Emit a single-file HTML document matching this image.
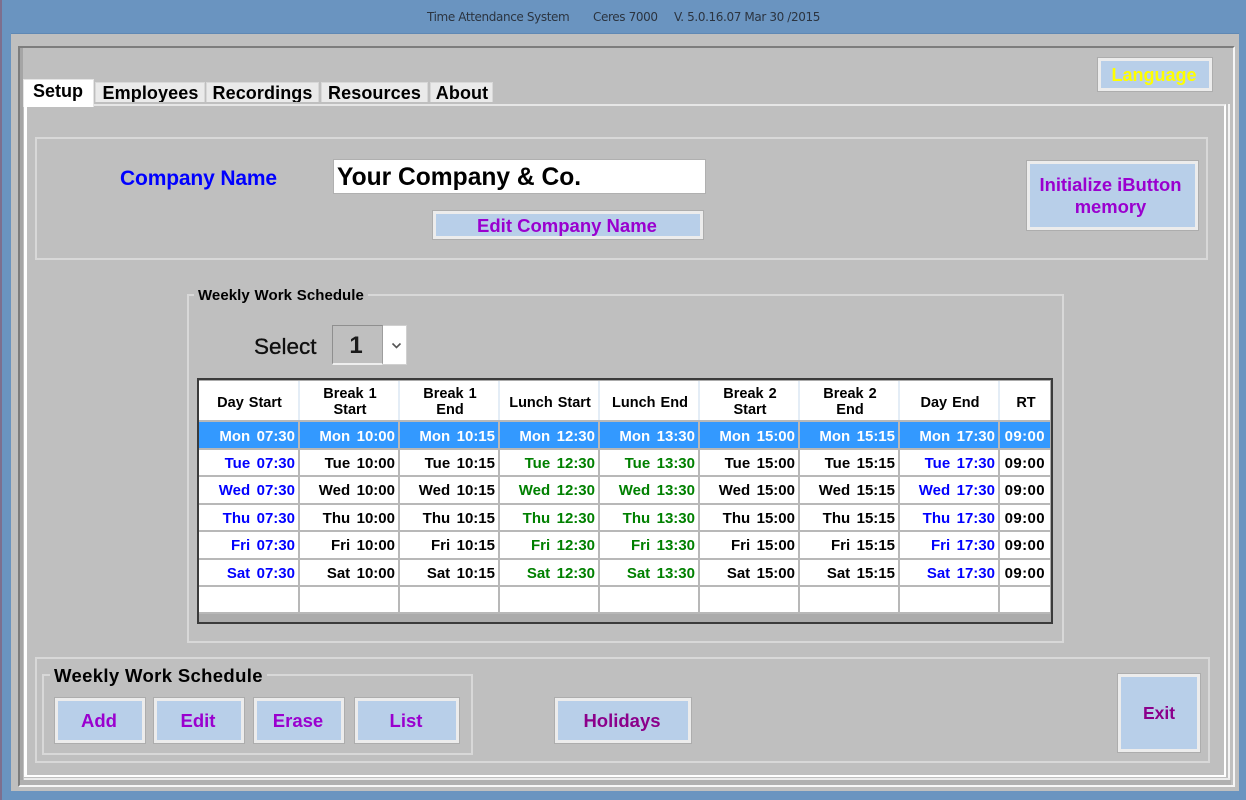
<!DOCTYPE html>
<html><head><meta charset="utf-8"><style>
html,body{margin:0;padding:0}
body{width:1246px;height:800px;overflow:hidden;position:relative;background:#6a94c0;font-family:"Liberation Sans",sans-serif;font-weight:bold;color:#000}
div{position:absolute;box-sizing:border-box}
#w{left:0;top:0;width:1246px;height:800px;background:#6a94c0;filter:blur(.35px)}
.t{white-space:nowrap}
.tt{font-size:12px;font-weight:normal;color:#2b3440;line-height:16px;font-family:'DejaVu Sans',sans-serif;letter-spacing:-.38px;top:9px}
.box{border:2px solid #d8d8d8}
.btn{background:#b8cfe9;border:3px solid #ececec;outline:1px solid #adadad;color:#9a00cf;font-size:18.5px;display:flex;align-items:center;justify-content:center;text-align:center;line-height:22px;padding-right:2px}
.tab{background:#eaeaea;border:1px solid #d8d8d8;border-bottom:0;top:82px;height:20px;font-size:18px;letter-spacing:.1px;line-height:21px;overflow:hidden;text-align:center}
.c{height:27px;width:100px;border-right:2px solid #b8b8b8;border-bottom:2px solid #b8b8b8;font-size:15px;line-height:28px;text-align:right;padding-right:3px;word-spacing:2.3px;white-space:nowrap;background:#fff}
.r{width:50px;padding-right:5px;border-right:0;letter-spacing:.4px}
.k{height:28px;line-height:28px}
.s{height:28px;line-height:29px;background:#3399ff;color:#fff}
.h{top:0;width:100px;height:40px;padding:2px 0 0 2px;border-right:2px solid #e4edf6;font-size:14.5px;line-height:16px;text-align:center;display:flex;align-items:center;justify-content:center;background:#fff;word-spacing:1px}
.o{padding-top:4px}
.b{color:#0000ff}.g{color:#008000}
.w1{left:-1px;width:101px}
</style></head><body>
<div id="w">
<div style="left:0;top:0;width:2px;height:800px;background:#7d6f8e"></div>
<div class="t tt" style="left:427px">Time Attendance System</div>
<div class="t tt" style="left:593px">Ceres 7000</div>
<div class="t tt" style="left:674px">V. 5.0.16.07 Mar 30 /2015</div>

<div style="left:11px;top:33px;width:1228px;height:758px;background:#bfbfbf;border-top:1px solid #5f88b4"></div>
<div style="left:18px;top:46px;width:1217px;height:741px;border:2px solid #f6f6f6;border-top:2px solid #7d7d7d;border-left:2px solid #7d7d7d"></div>
<div style="left:20px;top:48px;width:3px;height:737px;background:#a5a5a5"></div>
<div style="left:20px;top:780px;width:1211px;height:5px;background:#b0b0b0"></div>
<div style="left:1228px;top:104px;width:2px;height:676px;background:#f4f4f4"></div>
<div style="left:24px;top:778px;width:1206px;height:2px;background:#ececec"></div>

<div style="left:24px;top:104px;width:1202px;height:673px;border:2px solid #fff;border-left:3px solid #fff;border-top:2px solid #e6e6e6;background:#bfbfbf"></div>

<div class="tab" style="left:95px;width:110px;padding-left:1px">Employees</div>
<div class="tab" style="left:206px;width:113px">Recordings</div>
<div class="tab" style="left:321px;width:107px">Resources</div>
<div class="tab" style="left:430px;width:63px;padding-left:1px">About</div>
<div style="left:23px;top:79px;width:71px;height:28px;background:#fff;font-size:18px;line-height:22px;text-align:center;border:1px solid #e4e4e4;border-bottom:0;padding-right:1px">Setup</div>

<div class="btn" style="left:1098px;top:58px;width:114px;height:33px;color:#ffff00;font-size:18px">Language</div>

<div class="box" style="left:35px;top:137px;width:1173px;height:123px"></div>
<div class="t" style="left:120px;top:167px;font-size:21px;line-height:24px;color:#0000ff;letter-spacing:-.15px">Company Name</div>
<div style="left:334px;top:160px;width:371px;height:33px;background:#fff;outline:1px solid #b0b0b0;font-size:24.6px;line-height:35px;padding-left:3px;white-space:nowrap">Your Company &amp; Co.</div>
<div class="btn" style="left:433px;top:211px;width:270px;height:28px;padding-top:1px">Edit Company Name</div>
<div class="btn" style="left:1027px;top:161px;width:171px;height:69px;padding-right:4px;font-size:18.4px">Initialize iButton<br>memory</div>

<div class="box" style="left:187px;top:294px;width:877px;height:349px"></div>
<div class="t" style="left:194px;top:288px;padding:0 4px;background:#bfbfbf;font-size:15px;line-height:16px;word-spacing:.6px;letter-spacing:.05px">Weekly Work Schedule</div>
<div class="t" style="left:254px;top:334px;font-size:22.5px;line-height:26px;font-weight:normal;-webkit-text-stroke:.3px #000;color:#111">Select</div>
<div style="left:332px;top:325px;width:75px;height:40px;background:#fff;border:1px solid #d0d0d0"></div>
<div style="left:332px;top:325px;width:51px;height:40px;background:#bfbfbf;border:1px solid #8f8f8f;border-right:1px solid #9d9d9d;border-bottom:2px solid #eee;font-size:24px;line-height:40px;padding-right:3px;text-align:center;color:#1a1a1a">1</div>
<svg style="position:absolute;left:391px;top:342px" width="11" height="8" viewBox="0 0 11 8"><path d="M1.5 1.5 L5.5 5.5 L9.5 1.5" fill="none" stroke="#555" stroke-width="1.6"/></svg>

<div style="left:197px;top:378px;width:856px;height:246px;background:#ababab;border:2px solid #3b3b3b"></div>
<div style="left:200px;top:381px;width:850px;height:232px">
<div class="h o w1">Day Start</div>
<div class="h" style="left:100px">Break 1<br>Start</div>
<div class="h" style="left:200px">Break 1<br>End</div>
<div class="h o" style="left:300px">Lunch Start</div>
<div class="h o" style="left:400px">Lunch End</div>
<div class="h" style="left:500px">Break 2<br>Start</div>
<div class="h" style="left:600px">Break 2<br>End</div>
<div class="h o" style="left:700px">Day End</div>
<div class="h o" style="left:800px;width:50px;border-right:0">RT</div>
<div style="left:-1px;top:39px;width:851px;height:2px;background:#b8b8b8"></div>

<div class="c s w1" style="top:41px">Mon 07:30</div><div class="c s" style="left:100px;top:41px">Mon 10:00</div><div class="c s" style="left:200px;top:41px">Mon 10:15</div><div class="c s" style="left:300px;top:41px">Mon 12:30</div><div class="c s" style="left:400px;top:41px">Mon 13:30</div><div class="c s" style="left:500px;top:41px">Mon 15:00</div><div class="c s" style="left:600px;top:41px">Mon 15:15</div><div class="c s" style="left:700px;top:41px">Mon 17:30</div><div class="c s r" style="left:800px;top:41px">09:00</div>

<div class="c b w1" style="top:69px">Tue 07:30</div><div class="c" style="left:100px;top:69px">Tue 10:00</div><div class="c" style="left:200px;top:69px">Tue 10:15</div><div class="c g" style="left:300px;top:69px">Tue 12:30</div><div class="c g" style="left:400px;top:69px">Tue 13:30</div><div class="c" style="left:500px;top:69px">Tue 15:00</div><div class="c" style="left:600px;top:69px">Tue 15:15</div><div class="c b" style="left:700px;top:69px">Tue 17:30</div><div class="c r" style="left:800px;top:69px">09:00</div>

<div class="c k b w1" style="top:96px">Wed 07:30</div><div class="c k" style="left:100px;top:96px">Wed 10:00</div><div class="c k" style="left:200px;top:96px">Wed 10:15</div><div class="c k g" style="left:300px;top:96px">Wed 12:30</div><div class="c k g" style="left:400px;top:96px">Wed 13:30</div><div class="c k" style="left:500px;top:96px">Wed 15:00</div><div class="c k" style="left:600px;top:96px">Wed 15:15</div><div class="c k b" style="left:700px;top:96px">Wed 17:30</div><div class="c k r" style="left:800px;top:96px">09:00</div>

<div class="c b w1" style="top:124px">Thu 07:30</div><div class="c" style="left:100px;top:124px">Thu 10:00</div><div class="c" style="left:200px;top:124px">Thu 10:15</div><div class="c g" style="left:300px;top:124px">Thu 12:30</div><div class="c g" style="left:400px;top:124px">Thu 13:30</div><div class="c" style="left:500px;top:124px">Thu 15:00</div><div class="c" style="left:600px;top:124px">Thu 15:15</div><div class="c b" style="left:700px;top:124px">Thu 17:30</div><div class="c r" style="left:800px;top:124px">09:00</div>

<div class="c k b w1" style="top:151px">Fri 07:30</div><div class="c k" style="left:100px;top:151px">Fri 10:00</div><div class="c k" style="left:200px;top:151px">Fri 10:15</div><div class="c k g" style="left:300px;top:151px">Fri 12:30</div><div class="c k g" style="left:400px;top:151px">Fri 13:30</div><div class="c k" style="left:500px;top:151px">Fri 15:00</div><div class="c k" style="left:600px;top:151px">Fri 15:15</div><div class="c k b" style="left:700px;top:151px">Fri 17:30</div><div class="c k r" style="left:800px;top:151px">09:00</div>

<div class="c b w1" style="top:179px">Sat 07:30</div><div class="c" style="left:100px;top:179px">Sat 10:00</div><div class="c" style="left:200px;top:179px">Sat 10:15</div><div class="c g" style="left:300px;top:179px">Sat 12:30</div><div class="c g" style="left:400px;top:179px">Sat 13:30</div><div class="c" style="left:500px;top:179px">Sat 15:00</div><div class="c" style="left:600px;top:179px">Sat 15:15</div><div class="c b" style="left:700px;top:179px">Sat 17:30</div><div class="c r" style="left:800px;top:179px">09:00</div>

<div class="c w1" style="top:206px"></div><div class="c" style="left:100px;top:206px"></div><div class="c" style="left:200px;top:206px"></div><div class="c" style="left:300px;top:206px"></div><div class="c" style="left:400px;top:206px"></div><div class="c" style="left:500px;top:206px"></div><div class="c" style="left:600px;top:206px"></div><div class="c" style="left:700px;top:206px"></div><div class="c r" style="left:800px;top:206px"></div>
</div>

<div class="box" style="left:35px;top:657px;width:1175px;height:106px"></div>
<div class="box" style="left:42px;top:674px;width:431px;height:81px"></div>
<div class="t" style="left:50px;top:665px;padding:0 4px;background:#bfbfbf;font-size:18.5px;line-height:22px;letter-spacing:.35px">Weekly Work Schedule</div>
<div class="btn" style="left:55px;top:698px;width:90px;height:45px">Add</div>
<div class="btn" style="left:154px;top:698px;width:90px;height:45px">Edit</div>
<div class="btn" style="left:254px;top:698px;width:90px;height:45px">Erase</div>
<div class="btn" style="left:355px;top:698px;width:104px;height:45px">List</div>
<div class="btn" style="left:555px;top:698px;width:136px;height:45px;color:#8b008b">Holidays</div>
<div class="btn" style="left:1118px;top:674px;width:82px;height:78px;color:#8b008b;font-size:17.5px;padding-right:0">Exit</div>
</div>
</body></html>
